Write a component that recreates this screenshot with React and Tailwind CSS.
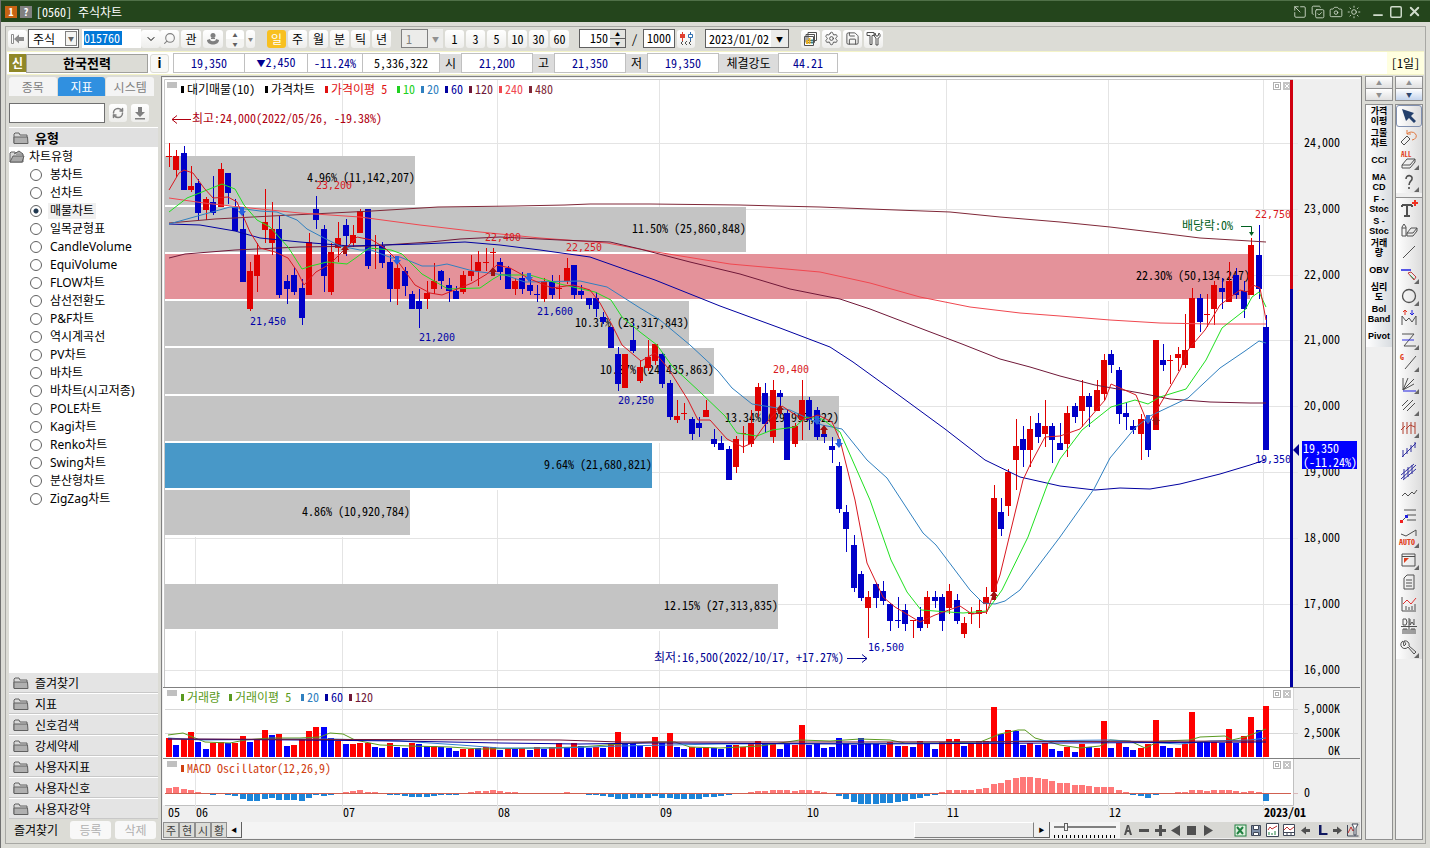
import { useState } from 'react';
import { Search, ChevronDown, RefreshCw, Camera, Sun, Minus, Square, X, Settings, Save, CopyCheck, SquareArrowOutUpLeft } from 'lucide-react';

// Session rows: [up, high, bodyTop, bodyBottom, low] on the price pane's y axis
const CANDLES = [
    [1, 143, 156, 157, 167], [1, 150, 156, 170, 177], [0, 146, 153, 190, 190], [1, 166, 186, 190, 192], [0, 179, 183, 213, 220],
    [1, 197, 199, 210, 220], [0, 176, 202, 213, 215], [1, 163, 169, 207, 207], [0, 173, 173, 193, 204], [0, 199, 207, 231, 231],
    [0, 213, 229, 282, 282], [1, 262, 271, 309, 311], [1, 243, 255, 276, 292], [1, 189, 222, 230, 243], [1, 202, 229, 243, 255],
    [0, 216, 229, 295, 298], [0, 275, 281, 289, 304], [0, 267, 275, 292, 295], [0, 279, 288, 318, 325], [1, 233, 242, 295, 295],
    [0, 196, 209, 220, 229], [0, 225, 229, 276, 292], [1, 243, 252, 292, 295], [1, 222, 238, 248, 262], [0, 219, 225, 236, 256],
    [1, 225, 235, 243, 247], [1, 209, 211, 233, 233], [0, 209, 209, 266, 269], [1, 235, 248, 249, 269], [0, 242, 246, 263, 268],
    [0, 255, 262, 289, 302], [1, 262, 268, 289, 305], [0, 267, 271, 286, 296], [0, 291, 294, 309, 309], [0, 289, 301, 309, 328],
    [1, 281, 293, 299, 309], [1, 263, 281, 289, 294], [0, 270, 271, 281, 289], [0, 278, 285, 291, 302], [0, 286, 291, 299, 299],
    [1, 271, 275, 292, 294], [1, 255, 271, 276, 281], [1, 251, 262, 271, 286], [1, 248, 262, 263, 271], [1, 248, 252, 253, 267],
    [0, 258, 262, 272, 280], [0, 266, 268, 289, 289], [1, 278, 281, 289, 295], [0, 272, 278, 289, 294], [0, 280, 285, 291, 295],
    [0, 285, 294, 295, 302], [1, 278, 281, 299, 302], [0, 275, 281, 295, 299], [1, 275, 288, 289, 299], [1, 258, 268, 281, 284],
    [0, 265, 265, 295, 299], [0, 285, 291, 295, 299], [0, 298, 298, 305, 309], [0, 292, 298, 309, 317], [0, 312, 317, 322, 324],
    [0, 327, 327, 348, 348], [0, 347, 354, 384, 391], [1, 354, 354, 388, 388], [0, 323, 340, 351, 353], [1, 360, 367, 381, 383],
    [1, 340, 357, 368, 371], [1, 344, 344, 361, 365], [0, 353, 354, 384, 388], [0, 380, 383, 417, 420], [1, 400, 416, 420, 423],
    [1, 403, 413, 414, 420], [0, 417, 419, 434, 440], [0, 417, 423, 428, 437], [1, 400, 410, 417, 417], [0, 429, 439, 444, 447],
    [0, 436, 443, 450, 450], [0, 446, 449, 480, 480], [1, 436, 439, 467, 473], [1, 426, 433, 434, 453], [1, 410, 423, 444, 447],
    [1, 383, 387, 411, 417], [0, 383, 393, 424, 433], [1, 380, 390, 437, 443], [0, 390, 393, 397, 407], [0, 410, 413, 460, 460],
    [1, 423, 426, 444, 447], [1, 380, 400, 420, 440], [0, 397, 400, 420, 430], [0, 407, 410, 437, 440], [0, 430, 434, 437, 443],
    [0, 437, 446, 450, 463], [0, 462, 466, 509, 513], [0, 505, 512, 529, 552], [0, 535, 545, 588, 592], [0, 571, 574, 598, 601],
    [1, 591, 597, 608, 638], [0, 583, 584, 598, 608], [0, 581, 591, 601, 605], [0, 603, 604, 621, 631], [0, 597, 620, 621, 628],
    [0, 604, 610, 624, 631], [1, 620, 620, 621, 638], [0, 607, 617, 628, 631], [1, 591, 597, 624, 628], [0, 591, 597, 601, 608],
    [0, 594, 597, 621, 631], [1, 584, 591, 608, 614], [0, 594, 600, 621, 624], [1, 617, 623, 634, 638], [1, 607, 613, 614, 624],
    [1, 600, 610, 614, 628], [1, 587, 597, 604, 614], [1, 485, 498, 592, 600], [0, 498, 512, 529, 536], [1, 469, 472, 506, 516],
    [1, 419, 446, 460, 490], [0, 426, 439, 450, 467], [1, 416, 429, 450, 467], [0, 413, 423, 437, 443], [1, 400, 426, 434, 447],
    [0, 423, 426, 440, 463], [0, 423, 443, 450, 450], [1, 406, 413, 444, 457], [0, 403, 406, 417, 423], [1, 380, 396, 411, 427],
    [0, 393, 396, 407, 427], [1, 380, 390, 411, 411], [1, 354, 360, 394, 400], [0, 350, 354, 365, 373], [0, 367, 370, 414, 424],
    [0, 403, 413, 417, 430], [0, 420, 426, 430, 434], [1, 414, 419, 434, 460], [0, 415, 419, 450, 457], [1, 340, 340, 430, 430],
    [0, 344, 360, 365, 371], [1, 355, 360, 361, 384], [1, 347, 354, 358, 371], [1, 314, 350, 365, 368], [1, 288, 298, 348, 348],
    [0, 294, 298, 322, 332], [1, 294, 314, 315, 327], [1, 281, 285, 309, 325], [0, 278, 288, 292, 309], [1, 262, 281, 302, 302],
    [0, 268, 275, 295, 299], [0, 281, 291, 309, 318], [1, 238, 245, 295, 295], [0, 225, 255, 289, 299], [0, 315, 327, 450, 450],
];

// Signed bar heights, negative = down volume (blue)
const VOLUME = [
    19, -12, 18, 25, -15, -8, 14, 15, -14, 14, 21, -15, 17, 27, -22, 23, -11, 12, 18, 26, 30, -30, -19, 16, -13,
    13, 14, 14, -10, -9, 14, -10, -9, 14, -13, -11, 11, -10, -9, -6, 8, 8, -9, 10, 10, -7, 9, -8, 9, -7,
    10, -8, 10, 14, -10, 14, -11, -9, 10, -9, 13, 25, -14, -14, -11, 10, 20, -14, 24, -10, -8, 10, -9, 10, -9,
    -8, -12, 12, 10, 14, 16, -13, 13, -8, -13, 12, 32, -12, -14, -9, -10, -19, -14, -12, -19, -14, -13, -12, 15, -11,
    11, -10, 16, -14, -8, 15, 18, 18, -11, 14, 16, 16, 50, -23, 27, -26, -12, 14, -12, 14, -8, -6, 10, -5, 13,
    -10, 9, 36, -9, 14, -10, -7, 9, 13, 37, -11, -9, 9, 13, 45, -15, -15, 15, -14, 28, -14, 21, 40, -27, 51,
];

const MACD = [
    5, 6, 4, 3, 1, 0, -1, 0, -1, -2, -5, -7, -7, -5, -4, -6, -6, -6, -7, -4, -1, -2, -1, 0, 1,
    2, 3, 1, 1, 0, -1, -1, -2, -3, -3, -3, -2, -1, -1, -1, 0, 1, 2, 2, 3, 2, 1, 1, 0, 0,
    0, 0, 0, 0, 1, 0, 0, -1, -1, -2, -3, -5, -5, -4, -4, -4, -2, -4, -4, -5, -5, -5, -5, -3, -3,
    -2, -1, 0, 0, 1, 2, 2, 3, 3, 3, 2, 3, 3, 2, 1, 0, -2, -5, -8, -10, -10, -10, -9, -9, -8,
    -7, -5, -4, -2, -1, 1, 3, 3, 3, 3, 4, 5, 9, 10, 13, 15, 16, 16, 15, 14, 12, 10, 10, 8, 8,
    7, 6, 6, 6, 3, 1, -1, -2, -4, -1, 0, 0, 1, 1, 3, 3, 2, 3, 3, 3, 2, 1, 2, 1, -7,
];

const AVERAGES = [
    { color: '#802838', points: '169,223 215,219 272,216 372,211 438,207 515,206 565,205 590,204 650,204 740,205 777,206 820,207 870,209 950,212 1000,217 1060,222 1110,227 1160,233 1200,238 1250,241 1266,242' },
    { color: '#f04850', points: '169,198 204,203 240,207 300,213 360,217 420,225 480,232 540,238 607,243 650,251 730,264 820,272 870,283 920,297 970,307 1020,313 1060,316 1110,320 1160,323 1210,324 1266,324' },
    { color: '#701838', points: '169,258 185,254 235,250 300,247 370,246 430,242 460,239 500,237 560,240 610,242 640,249 690,262 740,274 790,289 840,299 870,309 925,330 962,344 1000,359 1030,367 1060,376 1095,385 1140,393 1170,399 1210,402 1250,403 1266,403' },
    { color: '#0000a0', points: '169,224 200,225 235,231 260,238 300,242 350,246 420,244 465,242 500,245 540,250 590,257 655,280 720,306 780,328 830,347 853,362 900,396 945,429 985,460 1020,477 1060,486 1095,490 1120,488 1150,489 1180,484 1220,474 1250,465 1265,460' },
    { color: '#3080c0', points: '169,224 230,207 260,211 277,212 297,220 307,229 324,238 340,246 360,250 371,250 392,258 400,257 422,266 436,266 447,264 473,271 505,275 525,282 580,281 607,287 640,308 660,320 690,345 718,371 732,388 752,404 790,410 822,425 842,429 867,460 887,478 923,533 936,545 970,590 983,603 995,604 1005,601 1020,590 1060,537 1094,489 1110,458 1135,428 1150,416 1188,398 1220,368 1245,351 1259,341 1266,343' },
    { color: '#20e020', points: '169,212 187,198 222,184 235,189 244,205 257,220 270,227 288,247 302,269 311,266 327,262 347,264 357,257 369,248 391,250 402,254 422,274 448,289 480,288 493,279 500,275 530,275 560,284 595,292 611,300 622,317 640,332 657,345 672,366 700,392 725,416 737,433 757,436 772,430 795,427 806,417 822,419 840,432 870,500 891,560 907,592 921,610 963,613 987,611 1002,590 1028,537 1048,483 1060,459 1082,430 1111,407 1135,400 1148,404 1160,397 1186,389 1206,360 1222,328 1245,310 1252,297 1259,292 1266,307' },
    { color: '#d81820', points: '169,190 179,173 184,170 193,173 204,188 213,198 228,197 237,202 250,232 260,248 275,252 288,258 297,271 304,285 316,272 330,264 345,249 357,237 372,240 385,248 397,260 415,285 430,293 442,295 472,283 487,274 497,265 510,268 530,279 552,288 573,285 590,290 600,303 612,325 622,345 641,361 655,353 668,368 688,400 698,420 710,420 727,439 743,447 752,443 767,422 782,406 803,420 818,415 832,422 840,440 855,500 867,563 883,597 895,607 920,622 935,615 960,606 972,614 987,612 1000,575 1023,480 1030,465 1045,437 1060,436 1080,429 1105,400 1111,384 1136,395 1148,424 1158,408 1180,370 1188,350 1205,330 1220,305 1240,290 1247,292 1253,285 1260,288 1266,320' },
];

const VOLUME_AVERAGES = [
    { color: '#5a9a20', points: '168,735 183,733 195,738 205,742 230,743 245,740 270,738 300,738 320,737 330,733 343,734 355,740 380,745 410,746 450,747 480,749 540,748 580,747 620,744 650,742 675,742 690,747 720,748 760,746 800,740 830,741 860,739 890,740 905,743 940,743 980,742 1000,734 1018,730 1025,730 1035,738 1060,745 1080,748 1100,746 1110,740 1130,741 1145,748 1160,741 1190,740 1200,737 1225,736 1232,740 1245,737 1266,729' },
    { color: '#3080d0', points: '168,738 200,740 330,739 400,741 460,745 500,748 560,748 620,746 720,744 980,743 1020,741 1110,740 1160,743 1180,744 1210,741 1250,740 1266,738' },
    { color: '#0000a0', points: '168,739 300,740 400,741 500,743 580,744 650,743 860,744 1266,742' },
    { color: '#701838', points: '168,739 560,740 620,742 860,742 1266,741' },
];

// Volume-at-price zones
const ZONES = [
    { y: 156, h: 49, end: 415, text: '4.96% (11,142,207)' },
    { y: 207, h: 45, end: 746, text: '11.50% (25,860,848)' },
    { y: 254, h: 45, end: 1250, text: '22.30% (50,134,247)', color: '#e4929a' },
    { y: 301, h: 45, end: 689, text: '10.37% (23,317,843)' },
    { y: 348, h: 46, end: 714, text: '10.87% (24,435,863)' },
    { y: 396, h: 45, end: 839, text: '13.34% (29,993,822)' },
    { y: 443, h: 45, end: 652, text: '9.64% (21,680,821)', color: '#4898c8' },
    { y: 490, h: 45, end: 410, text: '4.86% (10,920,784)' },
    { y: 584, h: 45, end: 778, text: '12.15% (27,313,835)' },
];

const PRICE_TICKS = [
    [143, '24,000'], [209, '23,000'], [275, '22,000'], [340, '21,000'], [406, '20,000'],
    [472, '19,000'], [538, '18,000'], [604, '17,000'], [670, '16,000'],
];

const MONTHS = [
    [167, '05'], [195, '06'], [342, '07'], [497, '08'], [659, '09'], [806, '10'], [946, '11'], [1108, '12'], [1263, '2023/01'],
];

const SWING_LABELS = [
    [250, 325, '21,450', 0], [316, 189, '23,200', 1], [419, 341, '21,200', 0], [485, 241, '22,400', 1], [537, 315, '21,600', 0],
    [566, 251, '22,250', 1], [618, 404, '20,250', 0], [773, 373, '20,400', 1], [868, 651, '16,500', 0], [1255, 218, '22,750', 1], [1255, 463, '19,350', 0],
];

const SELL_MARKS = [[242, 207], [397, 256], [529, 273], [817, 416], [839, 439], [1148, 415]];
const BUY_MARKS = [[345, 245], [493, 267], [780, 405], [824, 425], [994, 591], [1156, 416]];

const LEGEND = [
    [181, '대기매물(10)', '#000'], [265, '가격차트', '#000'], [325, '가격이평 5', '#e01010'], [397, '10', '#20d020'], [421, '20', '#3080c0'],
    [445, '60', '#0000a0'], [469, '120', '#701838'], [499, '240', '#f04850'], [529, '480', '#802838'],
];

const VOLUME_LEGEND = [
    [181, '거래량', '#5a9a20'], [229, '거래이평 5', '#5a9a20'], [301, '20', '#3080c0'], [325, '60', '#0000a0'], [349, '120', '#701838'],
];

const CHART_TYPES = [
    '봉차트', '선차트', '매물차트', '일목균형표', 'CandleVolume', 'EquiVolume', 'FLOW차트', '삼선전환도', 'P&F차트', '역시계곡선',
    'PV차트', '바차트', '바차트(시고저종)', 'POLE차트', 'Kagi차트', 'Renko차트', 'Swing차트', '분산형차트', 'ZigZag차트',
];

const FOLDERS = ['즐겨찾기', '지표', '신호검색', '강세약세', '사용자지표', '사용자신호', '사용자강약'];

const INDICATORS = [
    ['가격', '이평'], ['그물', '차트'], ['CCI'], ['MA', 'CD'], ['F -', 'Stoc'], ['S -', 'Stoc'], ['거래', '량'], ['OBV'], ['심리', '도'], ['Bol', 'Band'], ['Pivot'],
];

const barX = (i) => Math.round(169 + i * 7.362);

function Legend({ items, y }) {
    return (
        <>
            <rect x="167" y={y - 12} width="10" height="6" fill="#c0c0c0" />
            {items.map(([x, text, color]) => (
                <g key={x} fill={color}>
                    <rect x={x} y={y - 8} width="3" height="7" />
                    <text x={x + 6} y={y}>{text}</text>
                </g>
            ))}
        </>
    );
}

function PaneButtons({ y }) {
    return (
        <g fill="none" stroke="#b0b0b0">
            <rect x="1273.5" y={y + 0.5} width="7" height="7" />
            <rect x="1275.5" y={y + 2.5} width="3" height="3" />
            <rect x="1283" y={y} width="8" height="8" fill="#c4c4c4" stroke="none" />
            <path d={`M1285 ${y + 2}l4 4m0-4l-4 4`} stroke="#fff" />
        </g>
    );
}

function MonthLines({ top, bottom }) {
    return MONTHS.slice(1).map(([x]) => (
        <path key={x} d={`M${x + 0.5} ${top}V${bottom}`} stroke="#e4e4e4" />
    ));
}

function PricePane() {
    return (
        <svg viewBox="163 78 1197 609" className="block w-full" role="img" aria-label="가격차트">
            <rect x="163" y="78" width="1197" height="609" fill="#fff" />
            <rect x="1293" y="79" width="67" height="608" fill="#efefef" />
            <path d="M164.5 687V79.5H1293" fill="none" stroke="#c8c8c8" />
            <MonthLines top={80} bottom={687} />
            {PRICE_TICKS.map(([y]) => (
                <path key={y} d={`M165 ${y + 0.5}H1298`} stroke="#e4e4e4" />
            ))}
            {ZONES.map((z) => (
                <g key={z.y}>
                    <rect x="165" y={z.y} width={z.end - 165} height={z.h + 2} fill="#fff" />
                    <rect x="165" y={z.y} width={z.end - 165} height={z.h} fill={z.color || '#c4c4c4'} />
                    <text x={z.end} y={z.y + 26} textAnchor="end">{z.text}</text>
                </g>
            ))}
            <g shapeRendering="crispEdges">
                {CANDLES.map(([up, high, top, bottom, low], i) => (
                    <g key={i} fill={up ? '#e00000' : '#0000c8'}>
                        <rect x={barX(i)} y={high} width="1" height={low - high} />
                        <rect x={barX(i) - 3} y={top} width="6" height={bottom - top} />
                    </g>
                ))}
            </g>
            {AVERAGES.map((line) => (
                <polyline key={line.color} points={line.points} fill="none" stroke={line.color} strokeWidth="1" />
            ))}
            {SELL_MARKS.map(([x, y]) => (
                <path key={x} d={`M${x - 2} ${y}h4v4h2l-4 5l-4-5h2z`} fill="#2860e0" />
            ))}
            {BUY_MARKS.map(([x, y]) => (
                <path key={x} d={`M${x - 2} ${y + 9}h4v-4h2l-4-5l-4 5h2z`} fill="#a01010" />
            ))}

            <Legend items={LEGEND} y={94} />
            <PaneButtons y={82} />

            <g fill="#b00010">
                <path d="M191 119.5H172m5-4l-5 4l5 4" fill="none" stroke="#b00010" />
                <text x="192" y="123">최고:24,000(2022/05/26, -19.38%)</text>
            </g>
            <g fill="#000090">
                <path d="M847 658.5H867m-5-4l5 4l-5 4" fill="none" stroke="#000090" />
                <text x="654" y="662">최저:16,500(2022/10/17, +17.27%)</text>
            </g>
            <g fill="#006020">
                <path d="M1241 226.5H1251.5V234" fill="none" stroke="#006020" />
                <path d="M1249 232h5l-2.500 4z" />
                <text x="1182" y="230">배당락:0%</text>
            </g>
            <g className="font-['DejaVu_Sans_Mono',monospace] text-[10px]">
                {SWING_LABELS.map(([x, y, text, up]) => (
                    <text key={text} x={x} y={y} fill={up ? '#d81820' : '#0000a8'}>{text}</text>
                ))}
            </g>

            <rect x="1290" y="80" width="3" height="209" fill="#d00010" />
            <rect x="1290" y="289" width="3" height="398" fill="#0000a0" />
            {PRICE_TICKS.map(([y, text]) => (
                <text key={y} x="1304" y={y + 4}>{text}</text>
            ))}
            <path d="M1293 450l6-6v12z" fill="#000090" />
            <rect x="1302" y="441" width="55" height="28" fill="#0000ff" />
            <g fill="#fff">
                <text x="1303" y="453">19,350</text>
                <text x="1303" y="467">(-11.24%)</text>
            </g>
        </svg>
    );
}

function VolumePane() {
    return (
        <svg viewBox="163 687 1197 71" className="block w-full" role="img" aria-label="거래량">
            <rect x="163" y="687" width="1197" height="71" fill="#fff" />
            <rect x="1293" y="687" width="67" height="71" fill="#efefef" />
            <path d="M163 687.500H1360" stroke="#808080" />
            <path d="M165 709.500H1298M165 733.500H1298M1293.500 688V758" stroke="#d8d8d8" />
            <MonthLines top={688} bottom={758} />
            <g shapeRendering="crispEdges">
                {VOLUME.map((v, i) => (
                    <rect key={i} x={barX(i) - 3} y={757 - Math.abs(v)} width="6" height={Math.abs(v)} fill={v > 0 ? '#ff0000' : '#0000ff'} />
                ))}
            </g>
            {VOLUME_AVERAGES.map((line) => (
                <polyline key={line.color} points={line.points} fill="none" stroke={line.color} />
            ))}
            <Legend items={VOLUME_LEGEND} y={702} />
            <PaneButtons y={690} />
            <g textAnchor="end">
                <text x="1340" y="713">5,000K</text>
                <text x="1340" y="737">2,500K</text>
                <text x="1340" y="755">0K</text>
            </g>
        </svg>
    );
}

function MacdPane() {
    return (
        <svg viewBox="163 758 1197 64" className="block w-full" role="img" aria-label="MACD Oscillator">
            <rect x="163" y="758" width="1131" height="47" fill="#fff" />
            <path d="M163 758.500H1360" stroke="#808080" />
            <path d="M165 805.500H1293.500V759" fill="none" stroke="#c0c0c0" />
            <MonthLines top={759} bottom={811} />
            <path d="M165 793.500H1291" stroke="#d06050" />
            <path d="M1293 793.500H1298" stroke="#d8b8b8" />
            <g shapeRendering="crispEdges">
                {MACD.map((v, i) => (
                    <rect key={i} x={barX(i) - 3} y={v > 0 ? 793 - v : 794} width="6" height={Math.abs(v)} fill={v > 0 ? '#ff7878' : '#1c84d8'} />
                ))}
            </g>
            <Legend items={[[181, 'MACD Oscillator(12,26,9)', '#d04010']]} y={773} />
            <PaneButtons y={761} />
            <text x="1304" y="797">0</text>
            {MONTHS.map(([x, text]) => (
                <text key={x} x={x + 1} y="817" fontWeight={text.length > 2 ? 700 : 400}>{text}</text>
            ))}
        </svg>
    );
}

const Corner = () => <path d="M21 16v5h-5z" fill="#666" stroke="none" />;

const DRAW_TOOLS = [
    ['선택', <path d="M4 4l4 12l3-3l5 5l2-2l-5-5l3-3z" fill="#24406c" stroke="none" />],
    ['되돌리기', <><path d="M3 15l6-6l3 3l-6 6z" /><path d="M9 7a5 4 0 1 1 5 6M9 3v4h4" stroke="#e07840" /></>],
    ['모두 지우기', <><text x="3" y="8" className="text-[7px] font-bold" fill="#e04020" stroke="none">ALL</text><path d="M4 16l5-6h8l-5 6zM4 16v3h8l5-6v-3" /><Corner /></>],
    ['도움말', <><path d="M8 8c0-5 7-4 6 0c0 2-3 2-3 6M11 16v2" strokeWidth="1.6" /><Corner /></>],
    ['문자', <><path d="M4 7h10M9 7v11M6 18h6M4 7v2M14 7v2" strokeWidth="2" /><path d="M17 2v6M14 5h6" stroke="#f03020" strokeWidth="2" /></>],
    ['편집', <><path d="M4 17V8l2-3l2 3v9zM4 9h4" /><path d="M9 14l4-5h6l-4 5zM9 14v3h6l4-5V9" /></>],
    ['추세선', <path d="M5 17L17 5" />],
    ['수평선', <><path d="M3 7h10" stroke="#2020e0" strokeWidth="1.5" /><path d="M10 10l3-1l5 5l-2 3z" stroke="#c04040" /><path d="M12 12l4 4" stroke="#30a060" /><Corner /></>],
    ['원', <><circle cx="11" cy="11" r="6.5" strokeWidth="1.3" /><Corner /></>],
    ['등락 표시', <><path d="M4 18V9l4 5l3-3l3 4l4-6v9" /><path d="M7 8V3M5 5l2-2l2 2" stroke="#e03020" /><path d="M14 3v5M12 6l2 2l2-2" stroke="#2020e0" /></>],
    ['구간선', <><path d="M4 5h12L6 17h12" /><path d="M4 11h12" stroke="#3030e0" /><Corner /></>],
    ['각도선', <><text x="2" y="9" className="text-[8px] font-bold" fill="#e04020" stroke="none">G</text><path d="M7 18L18 5" /><Corner /></>],
    ['팬', <><path d="M5 17V5M5 17l5-12M5 17L16 6M5 17l11-6" /><path d="M5 18h13" stroke="#2020e0" /><Corner /></>],
    ['평행선', <><path d="M4 11l6-6M5 15L15 5M9 16l8-8" /><Corner /></>],
    ['시간대', <><path d="M5 5v12M9 5v12M13 5v12M17 5v12M3 13l4-4M8 12l4-4l5 2" stroke="#b04030" /><Corner /></>],
    ['회귀선', <path d="M4 18L18 4M5 11v7M9 9v6M13 6v7M17 3v6" stroke="#3030a0" />],
    ['회귀채널', <path d="M3 14L16 3M5 19L18 8M6 8v10M10 6v10M14 4v9M3 18L18 4" stroke="#3030a0" />],
    ['파동선', <path d="M4 13l3-3l3 3l4-4l2 2l3-4" />],
    ['되돌림', <><path d="M6 5h12M9 10h9M9 15h9M4 16l6-6" /><rect x="2" y="15" width="3" height="3" fill="#f02020" stroke="none" /><rect x="7" y="10" width="3" height="3" fill="#2020e0" stroke="none" /></>],
    ['자동', <><path d="M3 7l5 2l5-3l5-3v6" /><text x="1" y="18" className="text-[8px] font-bold" fill="#e04020" stroke="none">AUTO</text><Corner /></>],
    ['창', <><path d="M4 5h13v12H4zM4 7.500h13" /><path d="M6 14V9h5z" fill="#e04020" stroke="none" /><Corner /></>],
    ['문서', <path d="M6 7l3-3h7v14H6zM8 9h6M8 12h6M8 15h6" />],
    ['지표 차트', <><path d="M4 4v14h14M8 17v-4M11 17v-3M14 17v-4M17 17v-6" /><path d="M5 11l4-4l4 4l5-6" stroke="#e03030" /></>],
    ['분할', <path d="M5 4v6h3l1-3l-1-3zM12 4v6l2-3l2 3V4M11 3v16M3 11.500h16M5 19v-5h4v5M7 14v5M13 19v-5h4v5M15 14v5" />],
    ['설정', <><path d="M5 4a4 4 0 1 0 5 6l6 7l2-2l-7-6a4 4 0 0 0-5-5l2 3l-2 2z" /><Corner /></>],
];

function Folder({ open }) {
    return (
        <svg width="16" height="14" viewBox="0 0 16 14" stroke="#606060" aria-hidden="true">
            <path d="M1 12V3l1-1h4l1 2h7v8z" fill="#d8d8d8" />
            {open ? <path d="M1 12L4 6h11l-2 6zM5 4l5-3l4 3" fill="#a8a8a8" /> : <path d="M1 12.500h14L14.500 6H1z" fill="#b0b0b0" />}
        </svg>
    );
}

function ToolButton({ label, className = 'w-[19px]', children }) {
    return (
        <button
            type="button"
            aria-label={label}
            className={`flex h-[18px] shrink-0 items-center justify-center rounded-[3px] bg-gradient-to-b from-white to-[#eeeeec] ${className}`}
        >
            {children}
        </button>
    );
}

function TitleBar() {
    return (
        <header className="flex h-[22px] items-center border-t border-[#507048] bg-[#24451c] pl-1 pr-2 text-white">
            <span className="h-3 w-3 bg-[#c86414] text-center text-[10px] font-bold leading-3">1</span>
            <span className="ml-[3px] h-3 w-3 bg-[#808080] text-center text-[10px] font-bold leading-3">?</span>
            <h1 className="ml-1 text-[12px] leading-4">[0560] 주식차트</h1>
            <div className="ml-auto flex items-center gap-1 text-[#d0dccc]">
                <button type="button" aria-label="분리"><SquareArrowOutUpLeft size={14} strokeWidth={1.5} /></button>
                <button type="button" aria-label="복사"><CopyCheck size={14} strokeWidth={1.5} /></button>
                <button type="button" aria-label="화면 저장"><Camera size={14} strokeWidth={1.5} /></button>
                <button type="button" aria-label="환경"><Sun size={14} strokeWidth={1.5} /></button>
                <button type="button" aria-label="최소화" className="ml-1.5 pt-1.5"><Minus size={14} strokeWidth={3} /></button>
                <button type="button" aria-label="최대화"><Square size={14} strokeWidth={2.5} /></button>
                <button type="button" aria-label="닫기"><X size={15} strokeWidth={3} /></button>
            </div>
        </header>
    );
}

function Toolbar() {
    const [period, setPeriod] = useState('일');

    return (
        <div className="flex h-6 items-center pb-px pl-0.5 text-[12px] leading-4">
            <ToolButton label="처음으로">
                <svg width="15" height="12" viewBox="0 0 15 12" fill="#8c8c8c"><path d="M1.500 1.500h2v9h-2z" fill="#fff" stroke="#8c8c8c" /><path d="M4 6l5-4.500V4h5v4H9v2.500z" /></svg>
            </ToolButton>
            <div className="relative ml-px h-[19px] w-[51px] border border-[#606060] bg-white">
                <select aria-label="종목 구분" className="h-full w-full appearance-none pl-1 leading-4">
                    <option>주식</option>
                </select>
                <span className="pointer-events-none absolute right-px top-px flex h-[15px] w-3 items-center justify-center border border-[#808080] bg-[#f4f4f2] text-[6px] text-[#606060]">▼</span>
            </div>
            <input aria-label="종목코드" defaultValue="015760" className="ml-[3px] h-[19px] w-[59px] bg-[linear-gradient(#0078d7,#0078d7)] bg-[length:38px_14px] bg-[position:2px_2px] bg-no-repeat pb-0.5 pl-0.5 text-white [background-color:white]" />
            <ToolButton label="종목 목록"><ChevronDown size={12} /></ToolButton>
            <ToolButton label="검색"><Search size={13} className="-scale-x-100 text-[#808080]" /></ToolButton>
            <ToolButton label="관심" className="ml-0.5 w-5">관</ToolButton>
            <ToolButton label="연동" className="ml-0.5 w-5">
                <svg width="14" height="14" viewBox="0 0 14 14" fill="#808080"><circle cx="7" cy="3.500" r="2.500" /><path d="M5 6h4v1H5zM1 8c0 6 12 6 12 0l-3-1c0 3-6 3-6 0z" /></svg>
            </ToolButton>
            <div className="ml-[3px] flex flex-col text-[#606060]">
                <button type="button" aria-label="이전 종목" className="h-[9px] w-[18px] rounded-t-[3px] bg-white text-[5px] leading-[9px]">▲</button>
                <button type="button" aria-label="다음 종목" className="h-[9px] w-[18px] rounded-b-[3px] bg-[#f4f4f2] text-[5px] leading-[9px]">▼</button>
            </div>
            <ToolButton label="종목 이력" className="ml-0.5 w-[9px] text-[5px] text-[#808080]">▼</ToolButton>

            <div className="ml-3 flex gap-0.5">
                {['일', '주', '월', '분', '틱', '년'].map((p) => (
                    <button
                        key={p}
                        type="button"
                        onClick={() => setPeriod(p)}
                        className={`h-[18px] w-[19px] rounded-[3px] ${p === period ? 'bg-[#f8c020] text-white' : 'bg-gradient-to-b from-white to-[#eeeeec]'}`}
                    >
                        {p}
                    </button>
                ))}
            </div>

            <div className="relative ml-2.5 h-[19px] w-[42px] bg-[#ececea]">
                <select aria-label="주기" disabled className="h-full w-[27px] appearance-none border border-[#808080] pl-1 leading-4 text-[#808080]">
                    <option>1</option>
                </select>
                <span className="pointer-events-none absolute right-1 top-1 text-[7px] leading-3 text-[#909090]">▼</span>
            </div>
            <div className="ml-0.5 flex gap-0.5">
                {['1', '3', '5', '10', '30', '60'].map((n) => (
                    <button key={n} type="button" className="h-[18px] w-[19px] rounded-[3px] bg-gradient-to-b from-white to-[#eeeeec]">{n}</button>
                ))}
            </div>

            <div className="ml-2.5 flex h-[19px] w-[47px] border border-[#606060] bg-white">
                <input aria-label="표시 봉수" defaultValue="150" className="w-7 pb-0.5 text-right" />
                <div className="ml-0.5 flex flex-1 flex-col bg-[#e4e4e0] text-center text-[5px] leading-[8px]">
                    <button type="button" aria-label="증가" className="h-[9px] border-b border-[#606060]">▲</button>
                    <button type="button" aria-label="감소" className="h-2">▼</button>
                </div>
            </div>
            <span className="w-[17px] text-center">/</span>
            <input aria-label="전체 봉수" defaultValue="1000" className="h-[19px] w-8 border border-[#606060] bg-white pb-0.5 pl-[3px]" />
            <ToolButton label="봉 이동" className="ml-0.5 w-[18px]">
                <svg width="15" height="15" viewBox="0 0 15 15" fill="none">
                    <path d="M3.500 1v9" stroke="#e04030" /><path d="M1 3h5v4H1z" fill="#e04030" /><path d="M11.500 1v9" stroke="#3070b0" /><path d="M9.500 3.500h4v3h-4z" fill="#fff" stroke="#3070b0" />
                    <path d="M4 10l-2 2l2 2M8 10l-2 2l2 2M12 10l-2 2l2 2" stroke="#505050" />
                </svg>
            </ToolButton>
            <div className="relative ml-2.5 h-[19px] w-[84px] border border-[#606060] bg-white">
                <select aria-label="기준일" className="h-full w-full appearance-none pl-[3px] leading-4">
                    <option>2023/01/02</option>
                </select>
                <span className="pointer-events-none absolute right-0 top-0 flex h-[17px] w-[17px] items-center justify-center bg-[#ececea] text-[7px]">▼</span>
            </div>
            <ToolButton label="차트 저장" className="ml-3 w-[19px]">
                <svg width="16" height="16" viewBox="0 0 16 16" fill="#fff" stroke="#505050"><path d="M5 1.500h8.500v8H5zM3 3.500h8.500v8H3zM1.500 5.500h9v9h-9z" /><path d="M4 13V9M6.500 13V7" stroke="#e8b020" strokeWidth="2" /><path d="M9 13V8" stroke="#30a0b0" /></svg>
            </ToolButton>
            <ToolButton label="환경 설정" className="ml-0.5 w-[19px]"><Settings size={15} strokeWidth={1.5} className="text-[#505050]" /></ToolButton>
            <ToolButton label="저장" className="ml-0.5 w-[19px]"><Save size={15} strokeWidth={1.5} className="text-[#505050]" /></ToolButton>
            <ToolButton label="도구" className="ml-0.5 w-[19px]">
                <svg width="15" height="15" viewBox="0 0 15 15" fill="none" stroke="#505050"><path d="M1 1.500h7v3H6v9H4v-9H1zM9 2l1 3h2l1-3c2 2 1 5-1 5v7h-2V7c-2-1-2-3-1-5z" /></svg>
            </ToolButton>
        </div>
    );
}

function QuoteBar() {
    return (
        <div className="mx-px flex h-6 items-center border-y border-[#f4f4c8] bg-white pl-0.5 text-[12px] leading-4">
            <span className="h-[18px] w-[17px] bg-[#908828] text-center font-bold leading-[18px] text-white">신</span>
            <button type="button" className="h-[19px] w-[122px] border border-[#a0a09c] bg-[#dcdcd6] text-[13px] font-bold leading-4">한국전력</button>
            <button type="button" aria-label="종목 정보" className="ml-0.5 h-[19px] w-[19px] rounded-[3px] border border-[#dcdcd6] bg-[#f8f8f6] text-[13px] font-bold leading-4">i</button>
            <table className="ml-1 h-[19px] w-[664px] table-fixed border-collapse text-center text-[#000090] [&_td]:border [&_td]:border-[#c0c0c0] [&_td]:p-0 [&_th]:bg-[#dcdcdc] [&_th]:p-0 [&_th]:font-normal [&_th]:text-black">
                <tbody>
                    <tr>
                        <td className="w-[71px]">19,350</td>
                        <td className="w-[63px]"><span className="text-[9px]">▼</span>2,450</td>
                        <td className="w-[55px]">-11.24%</td>
                        <td className="w-[77px] text-black">5,336,322</td>
                        <th scope="row" className="w-[22px]">시</th>
                        <td className="w-[71px]">21,200</td>
                        <th scope="row" className="w-[22px]">고</th>
                        <td className="w-[71px]">21,350</td>
                        <th scope="row" className="w-[22px]">저</th>
                        <td className="w-[71px]">19,350</td>
                        <th scope="row" className="w-[60px]">체결강도</th>
                        <td className="w-[59px]">44.21</td>
                    </tr>
                </tbody>
            </table>
            <span className="ml-auto flex h-full w-[37px] items-center justify-center bg-[#ffffe0]">[1일]</span>
        </div>
    );
}

function Sidebar() {
    const [tab, setTab] = useState('지표');
    const [chartType, setChartType] = useState('매물차트');

    return (
        <aside className="flex w-[149px] shrink-0 flex-col pt-px text-[12px] leading-4">
            <nav className="flex h-[19px] gap-px pr-1">
                {['종목', '지표', '시스템'].map((name) => (
                    <button
                        key={name}
                        type="button"
                        onClick={() => setTab(name)}
                        className={`flex-1 rounded-t-[3px] ${tab === name ? 'bg-[#3090e0] text-white' : 'bg-[#f4f4f4] text-[#808080]'}`}
                    >
                        {name}
                    </button>
                ))}
            </nav>
            <div className="mt-[7px] flex h-5 items-center">
                <input aria-label="지표 검색" className="h-5 w-24 border border-[#707070] bg-white px-1" />
                <ToolButton label="새로고침" className="ml-1 w-[18px]"><RefreshCw size={12} strokeWidth={3} className="text-[#808080]" /></ToolButton>
                <ToolButton label="내려받기" className="ml-1 w-[18px]">
                    <svg width="12" height="14" viewBox="0 0 12 14" fill="#808080"><path d="M4 1h4v5h3l-5 5l-5-5h3zM1 12h10v1.500H1z" /></svg>
                </ToolButton>
            </div>

            <h2 className="mt-1 flex h-5 items-center gap-1.5 border-t border-white bg-[#e0e0e0] pl-1 text-[13px] font-bold">
                <Folder />
                유형
            </h2>
            <div className="flex-1 bg-white font-['Noto_Sans','Noto_Sans_CJK_KR',sans-serif]">
                <p className="flex h-[19px] items-center gap-1"><Folder open />차트유형</p>
                <ul>
                    {CHART_TYPES.map((name) => (
                        <li key={name} className="h-[18px] pl-[21px]">
                            <label className="flex h-[18px] items-center">
                                <input
                                    type="radio"
                                    name="chartType"
                                    checked={chartType === name}
                                    onChange={() => setChartType(name)}
                                    className="h-3 w-3 appearance-none rounded-full border border-[#606060] bg-white checked:bg-[radial-gradient(circle,#203850_2px,white_3px)]"
                                />
                                <span className={`ml-1.5 whitespace-nowrap px-0.5 ${chartType === name ? 'bg-[#f0f0f0]' : ''}`}>{name}</span>
                            </label>
                        </li>
                    ))}
                </ul>
            </div>

            <div>
                {FOLDERS.map((name) => (
                    <button key={name} type="button" className="flex h-[21px] w-full items-center gap-1.5 border-b border-t border-b-[#c8c8c8] border-t-white bg-[#e4e4e4] pl-1">
                        <Folder />
                        {name}
                    </button>
                ))}
            </div>
            <div className="flex h-[21px] items-center gap-1 pl-[5px] pr-0.5">
                <span className="flex-1 whitespace-nowrap">즐겨찾기</span>
                <button type="button" disabled className="h-[18px] w-[41px] rounded-[3px] bg-[#f8f8f8] text-[#b0b0b0]">등록</button>
                <button type="button" disabled className="h-[18px] w-[41px] rounded-[3px] bg-[#f8f8f8] text-[#b0b0b0]">삭제</button>
            </div>
        </aside>
    );
}

function ChartFooter() {
    return (
        <div className="flex h-4 items-stretch bg-[#f4f4f4] text-[11px] leading-[14px]">
            {['주', '현', '시', '황'].map((name) => (
                <button key={name} type="button" className="w-4 shrink-0 border border-[#909090] bg-[#dcdcd8] text-center text-[#404040]">{name}</button>
            ))}
            <button type="button" aria-label="왼쪽으로" className="w-[15px] border-b border-r border-[#606060] bg-[#f0f0f0] text-[6px]">◀</button>
            <div className="flex flex-1">
                <div className="grow-[673]" />
                <div className="grow-[118] border border-b-[#808080] border-l-white border-r-[#808080] border-t-white bg-[#ececec]" />
            </div>
            <button type="button" aria-label="오른쪽으로" className="w-4 border-b border-r border-[#606060] bg-[#f0f0f0] text-[6px]">▶</button>
            <div className="ml-1 flex w-[62px] flex-col justify-between">
                <input
                    type="range"
                    aria-label="확대 비율"
                    defaultValue="18"
                    className="h-2.5 w-full appearance-none bg-[linear-gradient(#808080,#808080)] bg-[length:100%_2px] bg-center bg-no-repeat [&::-webkit-slider-thumb]:h-2 [&::-webkit-slider-thumb]:w-1 [&::-webkit-slider-thumb]:appearance-none [&::-webkit-slider-thumb]:border [&::-webkit-slider-thumb]:border-[#606060] [&::-webkit-slider-thumb]:bg-[#f0f0f0]"
                />
                <div className="h-[3px] bg-[repeating-linear-gradient(90deg,#000_0_1px,transparent_1px_4px)]" />
            </div>
            <svg viewBox="0 0 240 16" className="ml-1 w-60 shrink-0" role="img" aria-label="차트 도구">
                <rect width="240" height="16" fill="#d8d8d4" />
                <g fill="#505050">
                    <path d="M4 13l3-10h2l3 10h-2l-1-3H7l-1 3zM7.500 8h1.500l-.8-3z" />
                    <path d="M19 7h10v3H19zM35 7h4V3h3v4h4v3h-4v4h-3v-4h-4zM60 3v11l-9-5.500zM67 4h9v9h-9zM84 3v11l9-5.500z" />
                    <path d="M181 8.500l5-4V7h4v3h-4v2.500zM222 8.500l-5-4V7h-4v3h4v2.500z" />
                </g>
                <path d="M199 3h2.500v8h6v2H199z" fill="#101860" />
                <rect x="115" y="3" width="11" height="11" fill="#e0f0e0" stroke="#208040" />
                <path d="M117 5l6 7M123 5l-6 7" stroke="#208040" strokeWidth="2" />
                <g fill="#fff" stroke="#404858">
                    <path d="M131.500 3.500h9v10h-9z" fill="#8090a8" /><path d="M133.500 3.500h5v4h-5zM133.500 10.500h5v3h-5z" />
                    <path d="M146.500 1.500h12v13h-12z" /><path d="M148 8l2-3l2 2l5-3" stroke="#c03030" fill="none" /><path d="M149 13v-3M152 13v-2M155 13v-4" stroke="#208040" />
                    <path d="M163.500 2.500h11v11h-11z" /><path d="M164 8l3-3l3 3l4-3" stroke="#c03030" fill="none" /><path d="M164 10.500h11M167 11v3M171 11v3" />
                    <path d="M227.500 3v11h11" fill="none" /><path d="M228 11l3-6l2 4l4-6" stroke="#c03030" fill="none" /><path d="M232 2h6l-2 4v7h-2V6z" />
                </g>
            </svg>
        </div>
    );
}

function SpinPair({ label, active }) {
    return (
        <div className="flex h-[25px] flex-col border border-[#909090] text-[6px] leading-[11px] text-[#909090]">
            <button type="button" aria-label={`${label} 위로`} className="flex-1 border-b border-[#909090] bg-gradient-to-b from-white to-[#e0e0e0]">▲</button>
            <button type="button" aria-label={`${label} 아래로`} className={`flex-1 bg-gradient-to-b from-white ${active ? 'to-[#c4d4ec] text-[#304870]' : 'to-[#e0e0e0]'}`}>▼</button>
        </div>
    );
}

export default function App() {
    return (
        <div className="flex min-h-screen flex-col border-b border-l border-[#707070] bg-[#dcdcd6] font-['Noto_Sans_Mono_CJK_KR','Noto_Sans_CJK_KR',sans-serif] text-black">
            <TitleBar />
            <main className="m-1 flex flex-1 flex-col border border-[#a8a8a4] pb-[3px]">
                <Toolbar />
                <QuoteBar />
                <div className="mt-px flex flex-1 pl-[3px] pr-0.5">
                    <Sidebar />

                    <section className="ml-[3px] flex min-w-0 flex-1 flex-col border border-[#808080] bg-[#efefef] p-px text-[12px]">
                        <PricePane />
                        <VolumePane />
                        <MacdPane />
                        <ChartFooter />
                    </section>

                    {/* Indicator shortcuts */}
                    <div className="ml-[3px] flex w-7 shrink-0 flex-col gap-[3px]">
                        <SpinPair label="지표" />
                        <div className="flex-1 border border-[#909090] bg-[#efefef] font-['Liberation_Sans','Noto_Sans_CJK_KR',sans-serif]">
                            {INDICATORS.map((lines) => (
                                <button key={lines.join('')} type="button" className="flex h-[22px] w-full flex-col items-center justify-center bg-gradient-to-r from-white to-[#d8dce0] text-[9px] font-bold leading-[10px]">
                                    {lines.map((line) => <span key={line}>{line}</span>)}
                                </button>
                            ))}
                        </div>
                    </div>

                    {/* Drawing tools */}
                    <div className="ml-0.5 flex w-7 shrink-0 flex-col gap-[3px]">
                        <SpinPair label="도구" active />
                        <div className="flex-1 border border-[#909090] bg-[#efefef]">
                            {DRAW_TOOLS.map(([name, icon], i) => (
                                <button
                                    key={name}
                                    type="button"
                                    aria-label={name}
                                    className={`flex h-[22px] w-full items-center justify-center bg-gradient-to-r from-white to-[#dcdcdc] ${i === 0 ? 'rounded-[3px] border border-[#8090b0]' : ''} ${i === 4 ? 'mt-1 border-t border-[#909090]' : ''}`}
                                >
                                    <svg width="22" height="22" viewBox="0 0 22 22" fill="none" stroke="#505050" className="shrink-0">{icon}</svg>
                                </button>
                            ))}
                        </div>
                    </div>
                </div>
            </main>
        </div>
    );
}
